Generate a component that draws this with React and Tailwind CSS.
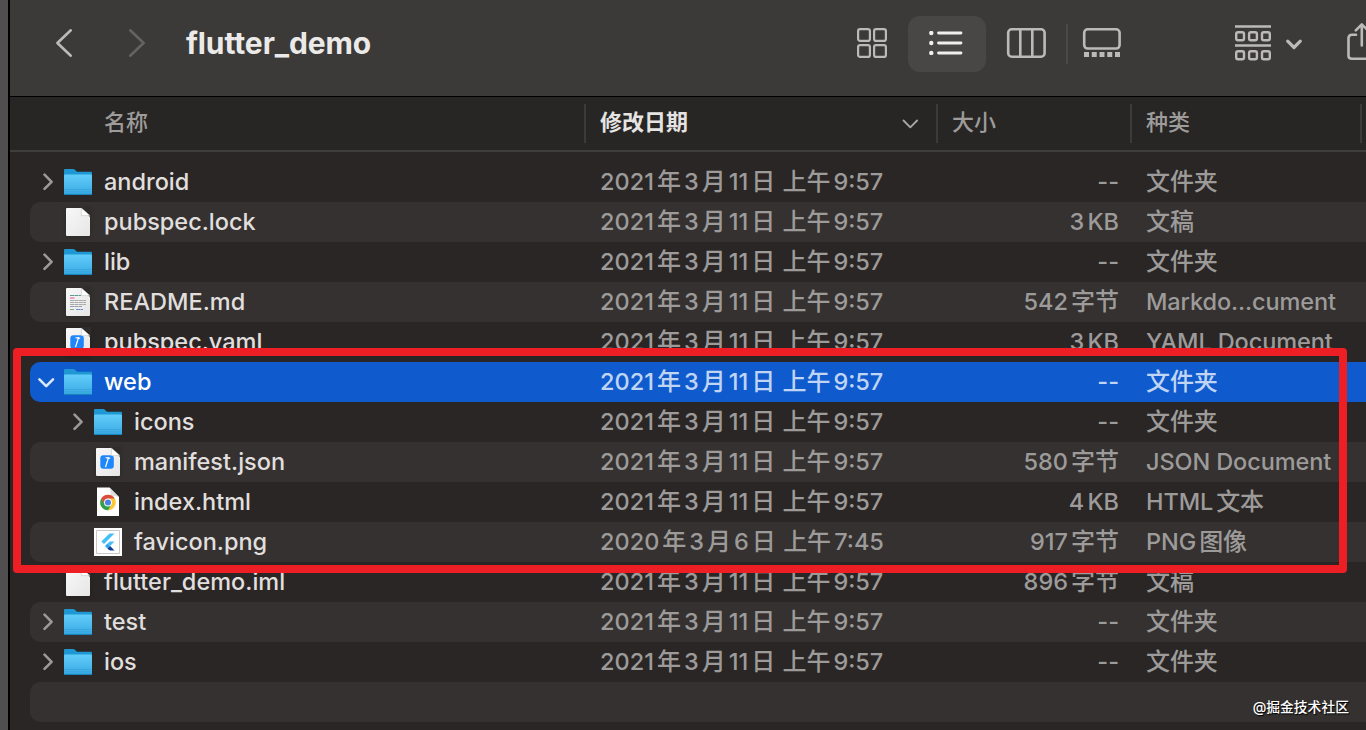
import React from 'react';

const files = [
  { name: 'android', icon: 'folder', arrow: 'right', size: '--', kind: '文件夹' },
  { name: 'pubspec.lock', icon: 'doc', size: '3 KB', kind: '文稿' },
  { name: 'lib', icon: 'folder', arrow: 'right', size: '--', kind: '文件夹' },
  { name: 'README.md', icon: 'markdown', size: '542字节', kind: 'Markdo...cument' },
  { name: 'pubspec.yaml', icon: 'xcode', size: '3 KB', kind: 'YAML Document' },
  { name: 'web', icon: 'folder', arrow: 'down', size: '--', kind: '文件夹', selected: true },
  { name: 'icons', icon: 'folder', arrow: 'right', size: '--', kind: '文件夹', nested: true },
  { name: 'manifest.json', icon: 'xcode', size: '580字节', kind: 'JSON Document', nested: true },
  { name: 'index.html', icon: 'chrome', size: '4 KB', kind: 'HTML文本', nested: true },
  { name: 'favicon.png', icon: 'flutter', size: '917字节', kind: 'PNG图像', nested: true, date: '2020年3月6日 上午7:45' },
  { name: 'flutter_demo.iml', icon: 'doc', size: '896字节', kind: '文稿' },
  { name: 'test', icon: 'folder', arrow: 'right', size: '--', kind: '文件夹' },
  { name: 'ios', icon: 'folder', arrow: 'right', size: '--', kind: '文件夹' },
];

// adds the small gap between latin and chinese runs
const Mixed = ({ text }) => {
  const parts = text.match(/[\u4e00-\u9fff]+|[^\u4e00-\u9fff]+/g);
  return parts.map((part, i) =>
    /[\u4e00-\u9fff]/.test(part) ? (
      <span key={i} className={i > 0 && parts[i - 1] !== ' ' ? 'mx-[3px] text-2xl/6 last:mr-0' : 'mr-[3px] text-2xl/6 last:mr-0'}>{part}</span>
    ) : (
      <span key={i}>{part}</span>
    )
  );
};

const Page = ({ children }) => (
  <svg width="28" height="30" viewBox="0 0 28 30" className="drop-shadow-sm">
    <defs>
      <linearGradient id="paper" x1="0" y1="0" x2="1" y2="1">
        <stop offset="0" stopColor="#f8f8f8" />
        <stop offset="1" stopColor="#e6e6e6" />
      </linearGradient>
    </defs>
    <path d="M3 1h14l9 9v18a1 1 0 0 1-1 1H3a1 1 0 0 1-1-1V2a1 1 0 0 1 1-1z" fill="url(#paper)" />
    {children}
    <path d="M17.400 1v7.600H26z" fill="#fff" stroke="#bdbdbd" strokeWidth=".5" />
    <path d="M17.400 0H27v8.600z" fill="#2f2c2b" />
  </svg>
);

const FileIcon = ({ type }) => {
  if (type === 'folder') {
    return (
      <svg width="28" height="30" viewBox="0 0 28 30">
        <defs>
          <linearGradient id="folder" x1="0" y1="0" x2="0" y2="1">
            <stop offset="0" stopColor="#62cdfb" />
            <stop offset="1" stopColor="#3cabe3" />
          </linearGradient>
        </defs>
        <path d="M0 27V3.200Q0 2 1.200 2H9q1.300 0 2.200.9L12.400 4.200Q13 4.800 14 4.800H27q1 0 1 1V27q0 1-1 1H1q-1 0-1-1z" fill="#1f97d3" />
        <path d="M0 8.500Q0 7.500 1 7.500H27q1 0 1 1V26q0 1-1 1H1q-1 0-1-1z" fill="url(#folder)" />
        <path d="M0 22.500h28M0 24.800h28" stroke="#2f9fd9" strokeWidth=".6" />
        <path d="M0 27.400h28" stroke="#1583bb" strokeWidth="1" />
      </svg>
    );
  }
  if (type === 'doc') return <Page />;
  if (type === 'markdown') {
    return (
      <Page>
        <g strokeWidth="1" strokeDasharray="4 .4">
          <path d="M6 8.500h11" stroke="#5c9a8f" />
          <path d="M6 11h5" stroke="#e04f94" />
          <path d="M6 13.500h16M6 15.500h16M6 17.500h16" stroke="#a8a8a8" />
          <path d="M6 19.500h12" stroke="#9a9aad" />
          <path d="M6 22.500h4" stroke="#79a88b" />
          <path d="M12 22.500h7" stroke="#6c8fd0" />
        </g>
      </Page>
    );
  }
  if (type === 'xcode') {
    return (
      <Page>
        <rect x="6.300" y="8.300" width="13.500" height="13.500" rx="3" fill="#1f86fb" />
        <path d="M10.600 10.900l2.300-.9 3.400.7-.3 1.300-1.700-.3" fill="#e8f2ff" />
        <path d="M14.500 10.600l-2.800 9" stroke="#fff" strokeWidth="1.300" strokeLinecap="round" />
      </Page>
    );
  }
  if (type === 'chrome') {
    return (
      <svg width="28" height="30" viewBox="0 0 28 30">
        <path d="M3 .5h12.500l9.500 9.500v19H3z" fill="#fff" />
        <path d="M15.500 .5q1.500 4 1 8.500 5-.5 8.500 1z" fill="#dedede" />
        <g transform="translate(14 15.500)">
          <circle r="7.800" fill="#fbc935" />
          <path d="M-6.750 -3.900A7.800 7.800 0 0 1 6.750 -3.900H0L-3.370 1.950z" fill="#dd4b3e" />
          <path d="M-6.750 -3.900A7.800 7.800 0 0 0 0 7.800L3.370 1.950H-3.370z" fill="#2da04f" />
          <circle r="3.900" fill="#fff" />
          <circle r="3" fill="#4681ea" />
        </g>
      </svg>
    );
  }
  return (
    <svg width="28" height="28" viewBox="0 0 28 28">
      <path d="M0 0h28v28H0z" fill="#fff" />
      <path d="M2.500 2.500h23v23h-23z" fill="#fff" stroke="#c9c9c9" />
      <path d="M15.500 5.500h5L10 16l-2.700-2.500z" fill="#46bff5" />
      <path d="M15.500 13.500h5l-4.400 4.500-2.600-2.300z" fill="#46bff5" />
      <path d="M11 18l2.500-2.500 2.600 2.500-2.600 2.500z" fill="#2fa6ea" />
      <path d="M13.500 20.500l2.600-2.500 4.400 4.500h-4q-1.500 0-3-2z" fill="#0d3f9a" />
    </svg>
  );
};

const Arrow = ({ direction, selected }) => (
  <svg width="20" height="20" viewBox="0 0 20 20" fill="none" stroke={selected ? '#dbe7fb' : '#9c9a99'} strokeWidth="2.600" strokeLinecap="round" strokeLinejoin="round">
    {direction === 'right' && <path d="M7.500 2.700l7.100 7.100-7.100 7.100" />}
    {direction === 'down' && <path d="M2.400 7.300l6.800 6.800 6.800-6.800" />}
  </svg>
);

const FileRow = ({ file, striped }) => {
  let bg = striped ? 'bg-[#343130]' : '';
  if (file.selected) bg = 'bg-[#0f5bce]';
  const muted = file.selected ? 'text-[#c0d5f4]' : 'text-[#9d9b9a]';

  return (
    <div className={`grid h-10 grid-cols-[570px_352px_167px_1fr] items-center rounded-l-[10px] text-[23.5px] leading-9 font-[450] whitespace-nowrap ${bg} ${muted}`}>
      <div className={`flex items-center ${file.nested ? 'pl-[37px]' : 'pl-[7px]'}`}>
        <Arrow direction={file.arrow} selected={file.selected} />
        <span className="ml-[7px] mr-3"><FileIcon type={file.icon} /></span>
        <span className={file.selected ? 'text-white' : 'text-[#e0dfde]'}>{file.name}</span>
      </div>
      <div className="[word-spacing:-2px]"><Mixed text={file.date || '2021年3月11日 上午9:57'} /></div>
      <div className="text-right [word-spacing:-3px]"><Mixed text={file.size} /></div>
      <div className="pl-[27px] tracking-[-0.1px]"><Mixed text={file.kind} /></div>
    </div>
  );
};

const Toolbar = () => (
  <div className="flex h-24 items-start overflow-hidden bg-[#3c3a38] text-[#bcbab8]">
    <svg className="ml-[44px] mt-[28px] shrink-0" width="22" height="30" fill="none" stroke="#bcbab8" strokeWidth="2.600" strokeLinecap="round" strokeLinejoin="round">
      <path d="M16.800 2.300L3.400 15l13.400 12.700" />
    </svg>
    <svg className="ml-[50px] mt-[28px] shrink-0" width="22" height="30" fill="none" stroke="#656361" strokeWidth="2.600" strokeLinecap="round" strokeLinejoin="round">
      <path d="M4.200 2.300L17.600 15 4.200 27.700" />
    </svg>
    <h1 className="ml-[38px] mt-[24px] w-[670px] shrink-0 text-[30px] leading-[38px] font-bold tracking-[-0.100px] text-[#ebeae9]">flutter_demo</h1>
    <svg className="mt-[28px] shrink-0" width="32" height="30" fill="none" stroke="currentColor" strokeWidth="2.200">
      <rect x="2.100" y="1.100" width="11.800" height="11.800" rx="2" />
      <rect x="18.100" y="1.100" width="11.800" height="11.800" rx="2" />
      <rect x="2.100" y="17.100" width="11.800" height="11.800" rx="2" />
      <rect x="18.100" y="17.100" width="11.800" height="11.800" rx="2" />
    </svg>
    <div className="ml-5 mt-4 flex h-14 w-[78px] shrink-0 items-center justify-center rounded-xl bg-[#484745] pr-[3px] pb-0.5">
      <svg width="34" height="24" fill="#f0efee" stroke="#f0efee" strokeWidth="2.800" strokeLinecap="round">
        <circle cx="2.300" cy="2" r="1.200" strokeWidth="2" />
        <circle cx="2.300" cy="12" r="1.200" strokeWidth="2" />
        <circle cx="2.300" cy="22" r="1.200" strokeWidth="2" />
        <path d="M9.500 2h22.500M9.500 12h22.500M9.500 22h22.500" />
      </svg>
    </div>
    <svg className="ml-5 mt-[28px] shrink-0" width="40" height="30" fill="none" stroke="currentColor" strokeWidth="2.600">
      <rect x="2.200" y="1.300" width="36.400" height="27.400" rx="3.500" />
      <path d="M14.300 1v28M26.300 1v28" />
    </svg>
    <div className="ml-5 mt-6 h-10 w-0.5 shrink-0 bg-[#4b4947]" />
    <svg className="ml-[14px] mt-[28px] shrink-0" width="40" height="30" fill="none" stroke="currentColor" strokeWidth="2.600">
      <rect x="2.200" y="1.300" width="35.400" height="19.200" rx="3.500" />
      <path d="M2 26.500h36" strokeWidth="5" strokeDasharray="5 2.750" />
    </svg>
    <svg className="ml-[112px] mt-[25px] shrink-0" width="38" height="36" fill="none" stroke="currentColor" strokeWidth="2.400">
      <path d="M1 1.500h36M1 20.500h36" />
      <rect x="2.200" y="7.300" width="7.800" height="8" rx="1.800" />
      <rect x="15.100" y="7.300" width="7.800" height="8" rx="1.800" />
      <rect x="28" y="7.300" width="7.800" height="8" rx="1.800" />
      <rect x="2.200" y="26.200" width="7.800" height="8" rx="1.800" />
      <rect x="15.100" y="26.200" width="7.800" height="8" rx="1.800" />
      <rect x="28" y="26.200" width="7.800" height="8" rx="1.800" />
    </svg>
    <svg className="ml-[12px] mt-[37px] shrink-0" width="20" height="14" fill="none" stroke="currentColor" strokeWidth="3.200" strokeLinecap="round" strokeLinejoin="round">
      <path d="M3.700 4.200L10 10.500l6.300-6.300" />
    </svg>
    <svg className="ml-[42px] mt-[22px] shrink-0" width="34" height="40" fill="none" stroke="currentColor" strokeWidth="2.600" strokeLinecap="round" strokeLinejoin="round">
      <path d="M10 12.800H6q-3.500 0-3.500 3.500v17.500q0 3 3.500 3h22M15.800 23.500V2.500M9.800 8.300l6-6 6 6" />
    </svg>
  </div>
);

const TableHeader = () => (
  <div className="flex h-[56px] items-start overflow-hidden border-t border-b-2 border-t-black border-b-[#3f3e3c] bg-[#282624] pt-[7px] text-[22px] leading-[36px] font-medium text-[#9e9c9b]">
    <div className="h-[39px] w-[576px] shrink-0 border-r-2 border-[#3c3b39] pl-[94px]">名称</div>
    <div className="flex h-[39px] w-[352px] shrink-0 items-start justify-between border-r-2 border-[#3c3b39] pl-[14px] pr-[17px] font-bold text-[#e5e4e3]">
      修改日期
      <svg className="mt-[14px]" width="18" height="12" fill="none" stroke="#aaa8a6" strokeWidth="1.800" strokeLinecap="round" strokeLinejoin="round">
        <path d="M2.500 2.500L9.300 9.300l6.800-6.800" />
      </svg>
    </div>
    <div className="h-[39px] w-[194px] shrink-0 border-r-2 border-[#3c3b39] pl-[14px]">大小</div>
    <div className="h-[39px] w-[230px] shrink-0 border-r-2 border-[#3c3b39] pl-[14px]">种类</div>
  </div>
);

const App = () => {
  return (
    <div className="relative flex h-[730px] w-[1366px] overflow-hidden bg-[#2a2625] font-['Inter','Noto_Sans_CJK_SC',sans-serif]">
      <div className="w-2 shrink-0 bg-[#504e4f]" />
      <div className="w-0.5 shrink-0 bg-black" />
      <div className="w-[1356px] shrink-0">
        <Toolbar />
        <TableHeader />
        <div className="pt-[10px] pl-5">
          {files.map((file, index) => (
            <FileRow key={file.name} file={file} striped={index % 2 === 1} />
          ))}
          <div className="h-10 rounded-l-[10px] bg-[#343130]" />
        </div>
      </div>

      <div className="absolute left-[12.500px] top-[348px] h-[225px] w-[1334px] rounded-[4px] border-[8px] border-[#ed1f24]" />
      <div className="absolute right-[17px] bottom-[13px] text-[13.800px] leading-5 font-medium text-white [text-shadow:1px_1px_1px_#000]">@掘金技术社区</div>
    </div>
  );
};

export default App;
